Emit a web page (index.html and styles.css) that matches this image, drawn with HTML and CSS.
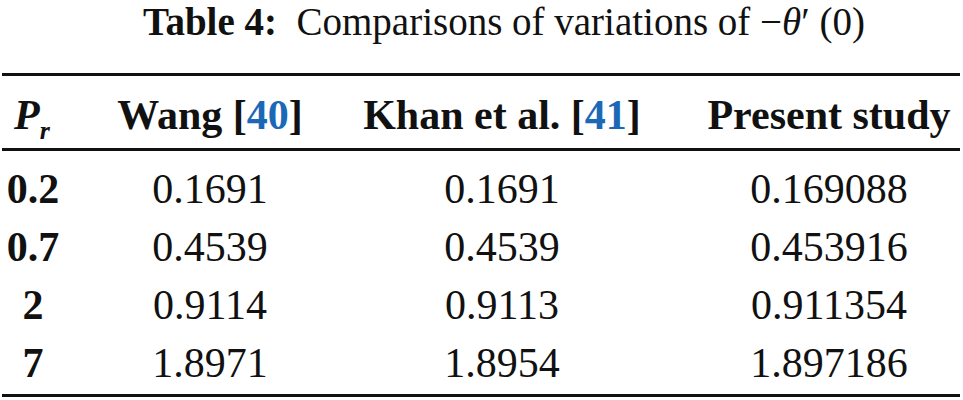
FILE: index.html
```html
<!DOCTYPE html>
<html lang="en">

<head>
    <meta charset="UTF-8">
    <meta name="viewport" content="width=device-width, initial-scale=1.0">
    <link rel="stylesheet" href="styles.css">
</head>

<body>
    <div class="table-wrap">
        <div class="table-title"><b>Table 4:</b>&nbsp; Comparisons of variations of &minus;<i>&theta;</i>&prime; (0)</div>

        <table class="results">
            <colgroup>
                <col class="col-pr">
                <col class="col-wang">
                <col class="col-khan">
                <col class="col-present">
            </colgroup>
            <thead>
                <tr>
                    <th><i>P<sub>r</sub></i></th>
                    <th>Wang [<a class="ref" href="#ref40">40</a>]</th>
                    <th>Khan et al. [<a class="ref" href="#ref41">41</a>]</th>
                    <th class="last">Present study</th>
                </tr>
            </thead>
            <tbody>
                <tr>
                    <td class="pr">0.2</td>
                    <td>0.1691</td>
                    <td>0.1691</td>
                    <td class="last">0.169088</td>
                </tr>
                <tr>
                    <td class="pr">0.7</td>
                    <td>0.4539</td>
                    <td>0.4539</td>
                    <td class="last">0.453916</td>
                </tr>
                <tr>
                    <td class="pr">2</td>
                    <td>0.9114</td>
                    <td>0.9113</td>
                    <td class="last">0.911354</td>
                </tr>
                <tr>
                    <td class="pr">7</td>
                    <td>1.8971</td>
                    <td>1.8954</td>
                    <td class="last">1.897186</td>
                </tr>
            </tbody>
        </table>
    </div>
</body>

</html>
```

FILE: styles.css
```css
body {
    margin: 0;
    background: #fff;
    color: #111;
    font-family: "Liberation Serif", "Times New Roman", serif;
    overflow: hidden;
}

.table-wrap {
    width: 958px;
    margin-left: 2px;
}

/* Caption above the table */
.table-title {
    font-size: 39px;
    line-height: 44px;
    text-align: center;
    padding-left: 46px;
    margin-bottom: 29px;
    white-space: nowrap;
}

.results {
    width: 958px;
    table-layout: fixed;
    border-collapse: collapse;
    font-size: 42px;
    border-top: 3px solid #111;
    border-bottom: 3px solid #111;
}

.col-pr {
    width: 60px;
}

.col-wang {
    width: 296px;
}

.col-khan {
    width: 288px;
}

.col-present {
    width: 314px;
}

.results th,
.results td {
    padding: 0;
    text-align: center;
    white-space: nowrap;
}

.results thead th {
    font-weight: bold;
    line-height: 48px;
    padding-top: 15px;
    padding-bottom: 9px;
    border-bottom: 3px solid #111;
}

.results th sub {
    font-size: 26px;
    vertical-align: -10px;
    line-height: 0;
}

.results .last {
    padding-left: 52px;
}

.results tbody td {
    line-height: 58px;
}

.results tbody tr:first-child td {
    padding-top: 9px;
}

.results tbody tr:last-child td {
    padding-bottom: 2px;
}

.results td.pr {
    font-weight: bold;
    padding-left: 2px;
}

.ref {
    color: #1b68b6;
    text-decoration: none;
}
```
